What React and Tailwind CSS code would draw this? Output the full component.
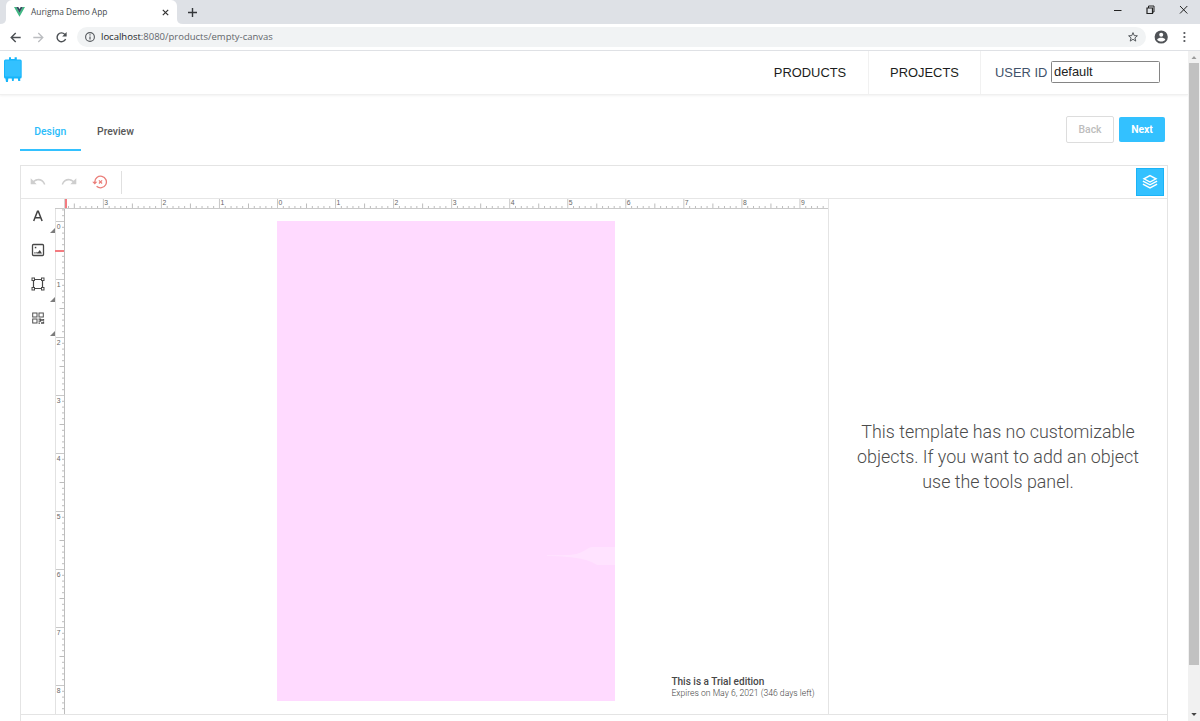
import React from "react";

const UNIT = 58.05;

function HorizontalRuler() {
  const origin = 222;
  const ticks = [];
  for (let i = -38; i <= 94; i++) {
    const x = origin + (i * UNIT) / 10;
    if (x < 10 || x > 772) continue;
    const major = i % 10 === 0;
    const half = !major && i % 5 === 0;
    ticks.push(
      <rect key={i} x={x} y={major ? 0 : half ? 4.5 : 7} width="1" height={major ? 9 : half ? 4.5 : 2} fill={major ? "#c8c8c8" : "#bcbcbc"} />
    );
  }
  const labels = [-3, -2, -1, 0, 1, 2, 3, 4, 5, 6, 7, 8, 9];
  return (
    <svg className="block h-[10px] w-[773px]" viewBox="0 0 773 10">
      {ticks}
      <path d="M0 9.5H773" stroke="#c9c9c9" />
      <path d="M9.5 0V10" stroke="#d5d5d5" />
      <rect x="10" y="0" width="2" height="9" fill="#f37b80" />
      {labels.map((n) => (
        <text key={n} x={origin + n * UNIT + 1.5} y="6.3" fontSize="6.8" fill="#666" fontFamily="Liberation Sans, sans-serif">
          {Math.abs(n)}
        </text>
      ))}
    </svg>
  );
}

function VerticalRuler() {
  const origin = 12;
  const ticks = [];
  for (let i = -2; i <= 84; i++) {
    const y = origin + (i * 58) / 10;
    const major = i % 10 === 0;
    const half = !major && i % 5 === 0;
    ticks.push(
      <rect key={i} x={major ? 0 : half ? 4.5 : 7} y={y} width={major ? 9 : half ? 4.5 : 2} height="1" fill={major ? "#c8c8c8" : "#bcbcbc"} />
    );
  }
  return (
    <svg className="block h-[505px] w-[10px] shrink-0" viewBox="0 0 10 505">
      {ticks}
      <path d="M9.5 0V505" stroke="#bdbdbd" />
      <path d="M.5 0V505" stroke="#e2e2e2" />
      <rect x="0" y="41" width="9" height="2" fill="#f37b80" />
      {[0, 1, 2, 3, 4, 5, 6, 7, 8].map((n) => (
        <text key={n} x="1.8" y={origin + n * 58 + 8} fontSize="6.8" fill="#666" fontFamily="Liberation Sans, sans-serif">
          {n}
        </text>
      ))}
    </svg>
  );
}

function BrowserTabs() {
  return (
    <div className="flex h-6 items-end bg-[#dee1e6]">
      <svg className="h-[5px] w-[6px]" viewBox="0 0 6 5"><path d="M6 0Q6 5 0 5H6Z" fill="#fff" /></svg>
      <div className="flex h-full w-[171px] items-center rounded-t-[6px] bg-white pr-[8px] pl-[8px]">
        <svg className="h-[10px] w-[11px]" viewBox="0 0 11 10">
          <path d="M0 0H2.3L5.5 5.6 8.7 0H11L5.5 9.7Z" fill="#41b883" />
          <path d="M2.2 0H4.3L5.5 2 6.7 0H8.8L5.5 5.8Z" fill="#35495e" />
        </svg>
        <span className="ml-[6px] flex-1 text-[8.4px] leading-6 whitespace-nowrap text-[#45494d]">Aurigma Demo App</span>
        <svg className="h-[7px] w-[7px]" viewBox="0 0 7 7"><path d="M.8.8 6.2 6.2M6.2.8.8 6.2" stroke="#333" strokeWidth="1.2" /></svg>
      </div>
      <svg className="h-[5px] w-[6px]" viewBox="0 0 6 5"><path d="M0 0Q0 5 6 5H0Z" fill="#fff" /></svg>
      <svg className="mb-[7.5px] ml-[5px] h-[9px] w-[9px]" viewBox="0 0 9 9"><path d="M4.5 0V9M0 4.5H9" stroke="#34373a" strokeWidth="1.4" /></svg>
      <div className="flex flex-1 items-center justify-end gap-[24px] self-start pt-[5px] pr-[12px]">
        <svg className="h-[9px] w-[9px]" viewBox="0 0 9 9"><path d="M1 5.5H8.5" stroke="#222" /></svg>
        <svg className="h-[9px] w-[9px]" viewBox="0 0 9 9" fill="none" stroke="#222"><path d="M1 3H6.5V8.5H1Z" strokeWidth="1.2" /><path d="M2.5 3V1H8V7H6.5" /></svg>
        <svg className="h-[9px] w-[9px]" viewBox="0 0 9 9"><path d="M1 1 8.3 8.5M8.3 1 1 8.5" stroke="#222" /></svg>
      </div>
    </div>
  );
}

function AddressBar() {
  return (
    <div className="flex h-[27px] items-center border-b border-[#dfe1e5] bg-white pl-[10px]">
      <svg className="h-[11px] w-[11px]" viewBox="0 0 11 11" fill="none" stroke="#4b4f53" strokeWidth="1.4"><path d="M10.7 5.5H1.3M5.7 1 1.2 5.5 5.7 10" /></svg>
      <svg className="ml-[12px] h-[11px] w-[11px]" viewBox="0 0 11 11" fill="none" stroke="#bbbdc0" strokeWidth="1.3"><path d="M.3 5.5H9.7M5.3 1 9.8 5.5 5.3 10" /></svg>
      <svg className="ml-[12px] h-[11px] w-[11px]" viewBox="0 0 11 11" fill="none"><path d="M9.6 6.9A4.4 4.4 0 1 1 8.8 2.4L9.8 3.5" stroke="#4b4f53" strokeWidth="1.4" /><path d="M10.6 0V4.5H6.2Z" fill="#4b4f53" /></svg>
      <div className="ml-[10px] flex h-5 w-[1069px] items-center rounded-full bg-[#f1f3f4] pr-[7px] pl-[8px]">
        <svg className="h-[10px] w-[10px]" viewBox="0 0 10 10" fill="none" stroke="#55595d"><circle cx="5" cy="5" r="4.4" strokeWidth="1.1" /><path d="M5 4.4V7.6M5 2.3V3.5" strokeWidth="1.2" /></svg>
        <span className="ml-[6px] flex-1 text-[9.5px] text-[#62666b]"><span className="text-[#222528]">localhost</span>:8080/products/empty-canvas</span>
        <svg className="h-[12px] w-[12px]" viewBox="0 0 12 12"><path d="M6 1.6 7.2 4.6 10.4 4.8 7.9 6.9 8.8 10.1 6 8.3 3.2 10.1 4.1 6.9 1.6 4.8 4.8 4.6Z" fill="none" stroke="#55595d" strokeWidth="1" /></svg>
      </div>
      <svg className="ml-[8px] h-[14px] w-[14px]" viewBox="0 0 14 14"><circle cx="7.2" cy="7" r="6.6" fill="#505357" /><circle cx="7.2" cy="4.7" r="2" fill="#fff" /><path d="M3.1 9.5C4.2 7.3 10.2 7.3 11.3 9.5 9.7 12.2 4.7 12.2 3.1 9.5Z" fill="#fff" /></svg>
      <svg className="ml-[14px] h-[12px] w-[4px]" viewBox="0 0 4 12" fill="#505357"><circle cx="2.4" cy="2" r="1.1" /><circle cx="2.4" cy="6" r="1.1" /><circle cx="2.4" cy="10" r="1.1" /></svg>
    </div>
  );
}

function SiteHeader() {
  return (
    <header className="flex h-[44px] shrink-0 border-b border-[#f0f0f0] font-['Liberation_Sans',sans-serif] text-[12.9px] text-[#1b1d20] shadow-[0_1px_2px_#f2f2f2]">
      <svg className="mt-[5px] ml-[3px] h-[28px] w-[20px]" viewBox="0 0 20 28">
        <path d="M6 5V1.2H8V3H11.6V1.2H13.8V5ZM2 20H17L17.3 25H15.2L14.8 22H11L10.7 25H9L8.7 22H5.4L4.9 26H3Z" fill="#16b5fa" />
        <rect x="1" y="3.5" width="17.7" height="19" rx="1.5" fill="#16b5fa" />
        <rect x="2" y="4.5" width="15.7" height="16" rx=".8" fill="#33c1ff" />
      </svg>
      <div className="ml-auto flex w-[117px] items-center justify-center border-r border-[#f1f1f1] pt-[1px]">PRODUCTS</div>
      <div className="flex w-[112px] items-center justify-center border-r border-[#f1f1f1] pt-[1px]">PROJECTS</div>
      <label className="flex w-[207px] items-center pl-[14px] text-[#42526a]">
        <span className="w-[55.5px] pt-[1px] whitespace-nowrap">USER ID</span>
        <input className="mb-[1px] h-[22px] w-[109.5px] rounded-[1.5px] border border-[#858585] pb-[1px] pl-[2.5px] text-[12.9px] text-[#222222]" defaultValue="default" />
      </label>
    </header>
  );
}

function StepTabs() {
  return (
    <div className="flex h-[70px] shrink-0 pt-[17px] pr-[23px] pl-[20px] font-[Roboto,sans-serif] text-[10.4px] font-medium">
      <div className="flex h-[39px] w-[60.5px] items-center justify-center border-b-2 border-[#33c1ff] pt-[2px] text-[#2bbcfa]">Design</div>
      <div className="flex h-[39px] w-[70px] items-center justify-center border-b-2 border-transparent pt-[2px] text-[#575757]">Preview</div>
      <div className="ml-auto flex items-start gap-[5px] pt-[3.5px]">
        <button className="h-[27px] w-[48px] rounded-[2px] border border-[#dddddd] pt-[2px] text-[#bdbdbd]">Back</button>
        <button className="mt-[1px] h-[25px] w-[46px] rounded-[2px] bg-[#33c1ff] pt-[1px] font-bold text-white">Next</button>
      </div>
    </div>
  );
}

function EditorToolbar() {
  return (
    <div className="flex h-[33px] shrink-0 items-center border-b border-[#e6e6e6] pr-[3px] pl-[9px]">
      <svg className="h-[10px] w-[16px]" viewBox="0 0 16 10"><path d="M.7 1.2V7.2H6.7L4.5 5C7.5 2.5 12.2 3 14 7.7L15.4 7.2C13.2 1.2 7.2 .2 3.3 3.8Z" fill="#cecece" /></svg>
      <svg className="ml-[15px] h-[10px] w-[16px]" viewBox="0 0 16 10"><path d="M15.3 1.2V7.2H9.3L11.5 5C8.5 2.5 3.8 3 2 7.7L.6 7.2C2.8 1.2 8.8 .2 12.7 3.8Z" fill="#cecece" /></svg>
      <svg className="ml-[15px] h-[15px] w-[16px]" viewBox="0 0 16 15" fill="none"><path d="M2.8 7.2A5.8 5.8 0 1 1 4.6 11.2" stroke="#ea7e79" strokeWidth="1.3" /><path d="M.2 6.7H5.4L2.8 9.5Z" fill="#ea7e79" /><path d="M6.9 5.3 10.1 8.5M10.1 5.3 6.9 8.5" stroke="#ea7e79" strokeWidth="1.2" /></svg>
      <div className="ml-[12.5px] h-[23px] w-px bg-[#e0e0e0]" />
      <button className="ml-auto flex h-[28px] w-[28.5px] items-center justify-center border border-[#1bb3f7] bg-[#33c1ff]">
        <svg className="h-[16px] w-[16px]" viewBox="0 0 16 16" fill="none" stroke="#fff" strokeWidth="1.4"><path d="M8 1.6 14 4.8 8 8 2 4.8Z" /><path d="M.9 7.2 8 10.8 15.1 7.2M.9 10.2 8 13.9 15.1 10.2" /></svg>
      </button>
    </div>
  );
}

function Tool({ children, menu }) {
  return (
    <div className="flex h-[34.2px]">
      <div className="flex flex-1 items-center justify-center pb-[1px]">{children}</div>
      {menu && <svg className="-ml-[5px] h-[5px] w-[5px] self-end" viewBox="0 0 5 5"><path d="M5 0V5H0Z" fill="#7c7c7c" /></svg>}
    </div>
  );
}

function Tools() {
  return (
    <div className="w-[34px] shrink-0">
      <Tool menu><svg className="h-[14px] w-[14px]" viewBox="0 0 14 14" fill="none" stroke="#424242" strokeWidth="1.5"><path d="M2.7 12 6.5 2.2H7.3L11.1 12M4.2 8.8H9.6" /></svg></Tool>
      <Tool><svg className="h-[14px] w-[14px]" viewBox="0 0 14 14" fill="none"><rect x="1.5" y="1.5" width="11" height="11" rx="1" stroke="#484848" strokeWidth="1.3" /><path d="M3.3 10.6V9.2L4.6 9.2V10.6ZM5.4 10.6V8.7L6.8 9.5 8.8 7 11 10.6Z" fill="#444" /><rect x="3.8" y="3.8" width="1.5" height="1.5" fill="#444" /></svg></Tool>
      <Tool menu><svg className="h-[14px] w-[14px]" viewBox="0 0 14 14" stroke="#484848"><path d="M2.5 2.5H11.5V11.5H2.5Z" fill="none" strokeWidth="1.2" /><g fill="#fff" strokeWidth="1"><rect x="1" y="1" width="2.5" height="2.5" /><rect x="10.5" y="1" width="2.5" height="2.5" /><rect x="1" y="10.5" width="2.5" height="2.5" /><rect x="10.5" y="10.5" width="2.5" height="2.5" /></g></svg></Tool>
      <Tool menu><svg className="h-[14px] w-[14px]" viewBox="0 0 14 14" fill="none" stroke="#505050"><rect x="1.7" y="2" width="4.3" height="4" /><rect x="8" y="2" width="4.3" height="4" /><rect x="1.7" y="8" width="4.3" height="4" /><path d="M7.5 8.2H9.5V10.2H7.5M9.5 9H12.5V8M10 12H12.5V10.5M7.5 12.2H9" strokeWidth="1.3" /></svg></Tool>
    </div>
  );
}

function Editor() {
  return (
    <main className="ml-[20px] flex h-[556px] w-[1148px] shrink-0 flex-col border-x border-t border-[#e4e4e4] font-[Roboto,sans-serif]">
      <EditorToolbar />
      <div className="flex h-[516px] shrink-0 border-b border-[#e4e4e4]">
        <Tools />
        <div className="w-[773px] shrink-0">
          <HorizontalRuler />
          <div className="flex">
            <VerticalRuler />
            <div className="flex h-[505px] flex-1 pt-[12px] pl-[212px]">
              <div className="flex h-[480px] w-[338px] shrink-0 items-start justify-end bg-[#ffdaff] pt-[326px]">
                <svg className="h-[19px] w-[68px]" viewBox="0 0 68 19"><path d="M0 8.3 22 8C38 7 39 0 46 0H68V18H50C42 13 32 9.5 0 9Z" fill="#ffe3ff" /></svg>
              </div>
              <div className="ml-[56.4px] self-end pb-[15px] whitespace-nowrap">
                <div className="pt-[1px] text-[10.05px] leading-[11.5px] font-medium text-[#484848]">This is a Trial edition</div>
                <div className="text-[8.65px] leading-[12px] font-light text-[#444444]">Expires on May 6, 2021 (346 days left)</div>
              </div>
            </div>
          </div>
        </div>
        <div className="flex flex-1 items-center justify-center border-l border-[#e4e4e4] text-center text-[17.87px] leading-[25px] font-light text-[#4c4c4c]">
          <p>This template has no customizable<br />objects. If you want to add an object<br />use the tools panel.</p>
        </div>
      </div>
    </main>
  );
}

function Scrollbar() {
  return (
    <div className="flex w-[12px] shrink-0 flex-col items-center bg-[#f1f1f1]">
      <svg className="h-[12px] w-[12px] shrink-0" viewBox="0 0 12 12"><path d="M3.5 8 6 5 8.5 8Z" fill="#9b9b9b" /></svg>
      <div className="h-[602px] w-[10px] bg-[#c1c1c1]" />
      <svg className="mt-auto mb-[1px] h-[12px] w-[12px]" viewBox="0 0 12 12"><path d="M3.3 5 6 8 8.7 5Z" fill="#444" /></svg>
    </div>
  );
}

export default function App() {
  return (
    <div className="flex h-[721px] w-[1200px] flex-col overflow-hidden bg-white font-['Open_Sans',sans-serif]">
      <BrowserTabs />
      <AddressBar />
      <div className="flex h-[670px]">
        <div className="flex w-[1188px] flex-col overflow-hidden">
          <SiteHeader />
          <StepTabs />
          <Editor />
        </div>
        <Scrollbar />
      </div>
    </div>
  );
}
